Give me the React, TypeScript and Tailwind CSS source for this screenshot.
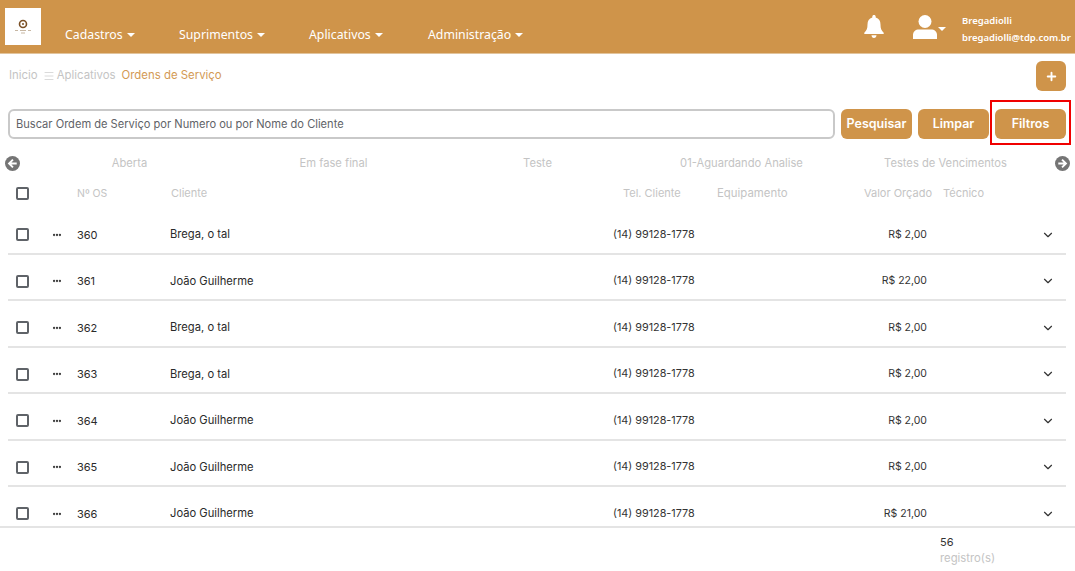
import { ChevronDown, Menu, MoreHorizontal, Plus } from 'lucide-react';

const rows = [
  { os: '360', cliente: 'Brega, o tal', valor: 'R$ 2,00' },
  { os: '361', cliente: 'João Guilherme', valor: 'R$ 22,00' },
  { os: '362', cliente: 'Brega, o tal', valor: 'R$ 2,00' },
  { os: '363', cliente: 'Brega, o tal', valor: 'R$ 2,00' },
  { os: '364', cliente: 'João Guilherme', valor: 'R$ 2,00' },
  { os: '365', cliente: 'João Guilherme', valor: 'R$ 2,00' },
  { os: '366', cliente: 'João Guilherme', valor: 'R$ 21,00' },
];

const menus = [
  { label: 'Cadastros', width: 'w-[114px]' },
  { label: 'Suprimentos', width: 'w-[130px]' },
  { label: 'Aplicativos', width: 'w-[119px]' },
  { label: 'Administração', width: 'w-[110px]' },
];

const tabs = ['Aberta', 'Em fase final', 'Teste', '01-Aguardando Analise', 'Testes de Vencimentos'];

function Caret() {
  return <span className="ml-[4px] inline-block border-x-[4px] border-t-[4px] border-x-transparent border-t-current align-middle" />;
}

function Arrow({ left }: { left?: boolean }) {
  return (
    <svg viewBox="0 0 16 16" className="size-[15px] shrink-0">
      <circle cx="8" cy="8" r="8" fill="#757575" />
      <path
        d={left ? 'M12.500 8H5M8.500 3.800 4.300 8l4.200 4.200' : 'M3.500 8H11M7.500 3.800 11.700 8l-4.200 4.200'}
        fill="none"
        stroke="#fff"
        strokeWidth="2"
      />
    </svg>
  );
}

function Check() {
  return <span className="block size-[13px] rounded-[2px] border-2 border-[#5f6368] bg-white" />;
}

function ActionButton({ label, className }: { label: string; className: string }) {
  return (
    <button className={`flex h-[30px] items-center justify-center rounded-[6px] bg-[#cf944a] text-[12.500px] font-semibold text-white ${className}`}>
      {label}
    </button>
  );
}

export default function App() {
  return (
    <div className="flex h-[571px] w-[1075px] flex-col overflow-hidden bg-white font-['Inter','Liberation_Sans',sans-serif] text-[11px]">
      <header className="flex h-[54px] shrink-0 items-center border-b border-[#e2c49c] bg-[#cf944a] text-white">
        <div className="ml-[5px] h-[37px] w-[36px] bg-white">
          <svg viewBox="0 0 36 37" className="size-full">
            <circle cx="18" cy="16" r="3.500" fill="none" stroke="#7a4f24" strokeWidth="1.6" />
            <circle cx="18" cy="16" r="1" fill="#7a4f24" />
            <path d="M10 22.500h3M15 22.500h6M23 22.500h3M16 25h4" stroke="#b9a48c" strokeWidth="0.8" />
          </svg>
        </div>
        <nav className="ml-[24px] mt-[17px] flex font-['Noto_Sans',sans-serif] text-[12.300px]">
          {menus.map((m) => (
            <span key={m.label} className={`shrink-0 whitespace-nowrap ${m.width}`}>
              {m.label}
              <Caret />
            </span>
          ))}
        </nav>
        <div className="ml-auto flex items-center">
          <svg viewBox="0 0 20 23" className="h-[23px] w-[20px] fill-white">
            <path d="M10 0c1 0 1.700.7 1.700 1.700v.8C15 3.300 16.500 6 16.500 9.500c0 4 .8 6 3.200 8.300v1.200H.3v-1.200C2.700 15.500 3.500 13.500 3.500 9.500c0-3.500 1.500-6.200 4.800-7v-.8C8.300.7 9 0 10 0zM7.500 20.300h5c0 1.500-1.100 2.700-2.500 2.700s-2.500-1.200-2.500-2.700z" />
          </svg>
          <svg viewBox="0 0 24 24" className="ml-[29px] size-[24px] fill-white">
            <circle cx="12" cy="6.500" r="6.500" />
            <path d="M0 24v-4c0-3.500 2.500-5.500 6-5.500h12c3.500 0 6 2 6 5.500v4z" />
          </svg>
          <span className="-ml-[3px] mt-[3px] text-white">
            <Caret />
          </span>
          <div className="ml-[16px] mr-[6px] mt-[4px] w-[107px] font-['Noto_Sans',sans-serif] text-[9.500px] font-semibold leading-[17px]">
            <div>Bregadiolli</div>
            <div className="whitespace-nowrap">bregadiolli@tdp.com.br</div>
          </div>
        </div>
      </header>

      <div className="flex h-[55px] shrink-0 items-start justify-between px-[9px] pt-[7px]">
        <div className="mt-[6px] flex items-center text-[11.400px] text-[#c4c4c4]">
          <span>Inicio</span>
          <Menu className="ml-[5px] mr-[2px] size-[12px]" strokeWidth={1.25} />
          <span>Aplicativos</span>
          <span className="ml-[6px] text-[#d39a55]">Ordens de Serviço</span>
        </div>
        <button className="flex size-[30px] items-center justify-center rounded-[6px] bg-[#cf944a] text-white">
          <Plus className="size-[13px]" strokeWidth={3.5} />
        </button>
      </div>

      <div className="relative flex h-[30px] shrink-0 items-center pl-[8px] pr-[9px]">
        <div className="flex h-[30px] w-[827px] items-center rounded-[6px] border-2 border-[#c9c9c9] pl-[6px] pt-px text-[11.100px] text-[#5f6368]">
          Buscar Ordem de Serviço por Numero ou por Nome do Cliente
        </div>
        <ActionButton label="Pesquisar" className="ml-[6px] w-[71px]" />
        <ActionButton label="Limpar" className="ml-[6px] w-[71px]" />
        <ActionButton label="Filtros" className="ml-[6px] w-[71px]" />
        <div className="absolute left-[990px] top-[-9px] h-[45px] w-[81px] border-2 border-[#f00000]" />
      </div>

      <div className="mt-[9px] flex h-[30px] shrink-0 items-center justify-between px-[5px] pt-px text-[11.200px] text-[#c4c4c4]">
        <Arrow left />
        <div className="flex">
          {tabs.map((t) => (
            <span key={t} className="w-[204px] whitespace-nowrap text-center">
              {t}
            </span>
          ))}
        </div>
        <Arrow />
      </div>

      <div className="grid h-[31px] shrink-0 grid-cols-[37px_24px_93px_443px_104px_130px_96px_1fr] items-center pl-[16px] text-[#c4c4c4]">
        <Check />
        <span />
        <span className="text-[10.500px]">Nº OS</span>
        <span className="pl-px">Cliente</span>
        <span className="pl-[10px]">Tel. Cliente</span>
        <span className="text-[11.400px]">Equipamento</span>
        <span className="whitespace-nowrap pl-[17px]">Valor Orçado</span>
        <span>Técnico</span>
      </div>

      <div className="min-h-0 flex-1 overflow-hidden border-b-2 border-[#e4e4e4]">
        <div className="mt-[-1px]">
          {rows.map((r) => (
            <div
              key={r.os}
              className="ml-[8px] mr-[9px] grid h-[46.500px] grid-cols-[37px_24px_93px_443px_104px_130px_80px_1fr] items-center border-b-2 border-[#e4e4e4] pl-[8px] pt-[9px] text-[#2a2a2a]"
            >
              <Check />
              <MoreHorizontal className="-ml-px size-[10px] text-[#333]" strokeWidth={3.5} />
              <span>{r.os}</span>
              <span className="text-[11.200px]">{r.cliente}</span>
              <span className="text-[10.800px] text-[#333]">(14) 99128-1778</span>
              <span />
              <span className="text-right text-[10.500px] text-[#333]">{r.valor}</span>
              <div className="flex justify-end pr-[11px]">
                <ChevronDown className="size-[14px] text-[#333]" strokeWidth={2} />
              </div>
            </div>
          ))}
        </div>
      </div>

      <div className="h-[43px] shrink-0 pl-[940px] pt-[6px] leading-[16px]">
        <div className="text-[#333]">56</div>
        <div className="text-[11.300px] text-[#c4c4c4]">registro(s)</div>
      </div>
    </div>
  );
}
